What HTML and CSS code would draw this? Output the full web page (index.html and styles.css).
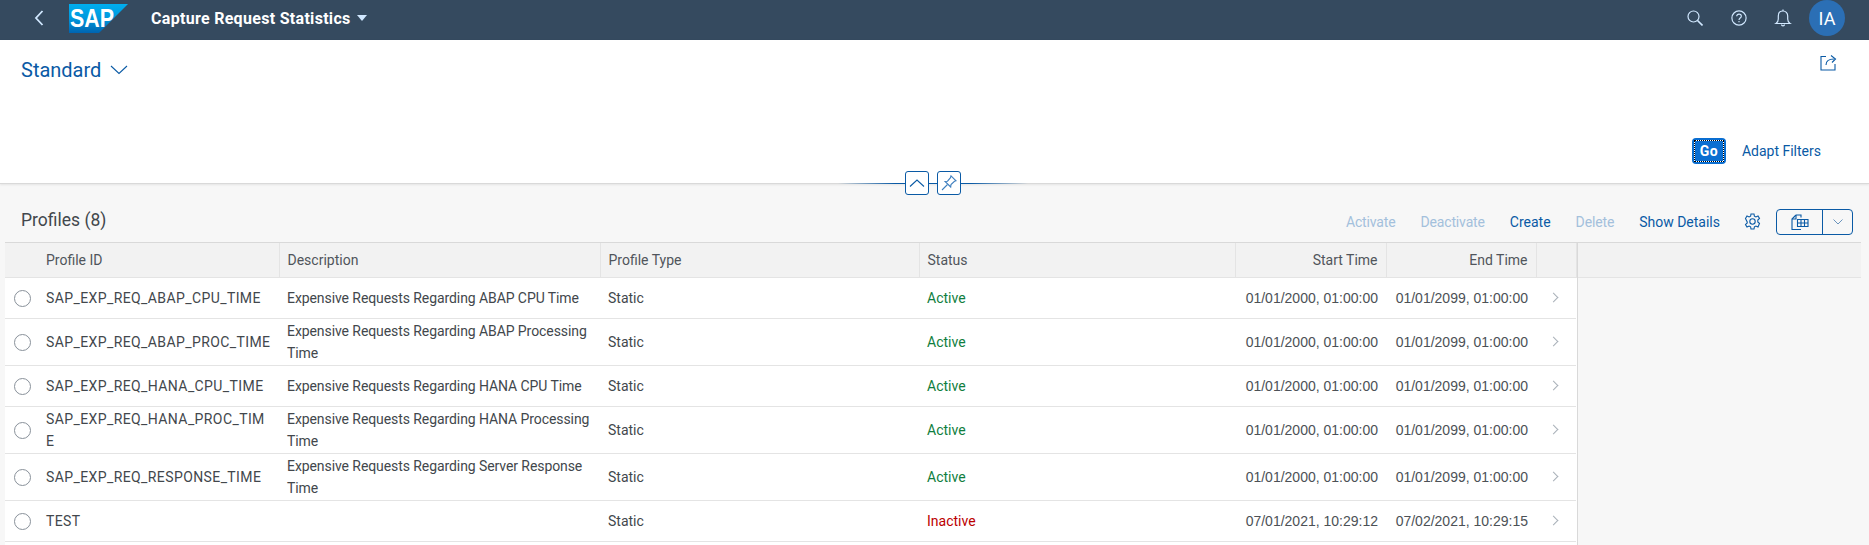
FILE: index.html
```html
<!DOCTYPE html>
<html lang="en">
<head>
    <meta charset="UTF-8">
    <meta name="viewport" content="width=device-width, initial-scale=1.0">
    <title>Capture Request Statistics</title>
    <link rel="stylesheet" href="styles.css">
</head>
<body>
    <header class="shell">
        <button class="shell-back" aria-label="Back">
            <svg width="12" height="18" viewBox="0 0 12 18"><path d="M9.500 2 3 9l6.500 7" fill="none" stroke="#d1e8ff" stroke-width="1.800"/></svg>
        </button>
        <svg class="logo" width="60" height="29" viewBox="0 0 60 29">
            <defs>
                <linearGradient id="logo-grad" x1="0" y1="0" x2="0" y2="1">
                    <stop offset="0" stop-color="#00aeef"/>
                    <stop offset="0.5" stop-color="#0098dd"/>
                    <stop offset="1" stop-color="#0064b0"/>
                </linearGradient>
            </defs>
            <polygon points="0,0 59,0 30,29 0,29" fill="url(#logo-grad)"/>
            <text x="1" y="23" class="logo-text" textLength="44" lengthAdjust="spacingAndGlyphs">SAP</text>
        </svg>
        <span class="shell-title">Capture Request Statistics</span>
        <span class="shell-caret"></span>
        <div class="shell-actions">
            <svg width="16" height="16" viewBox="0 0 16 16" fill="none" stroke="#d1e8ff" stroke-width="1.200"><circle cx="6.500" cy="6.500" r="5.500"/><path d="m10.500 10.500 5 5" stroke-width="1.600"/></svg>
            <svg width="16" height="16" viewBox="0 0 18 18" fill="none" stroke="#d1e8ff" stroke-width="1.300"><circle cx="9" cy="9" r="8"/><path d="M6.400 7C6.400 5.500 7.600 4.600 9 4.600s2.600.9 2.600 2.300c0 2.100-2.600 2.100-2.600 4.300"/><path d="M9 12.400v1.400"/></svg>
            <svg class="bell" width="18" height="18" viewBox="0 0 18 18" fill="none" stroke="#d1e8ff" stroke-width="1.200"><path d="M2 14.500c1.500-1 2.300-2 2.300-4.500V7c0-3 2-5 4.700-5s4.700 2 4.700 5v3c0 2.500.8 3.500 2.300 4.500z"/><path d="M7.500 15.500c0 1.800 3 1.800 3 0"/><path d="M9 2V.5"/></svg>
            <span class="avatar">IA</span>
        </div>
    </header>

    <section class="filterbar">
        <div class="variant-row">
            <span class="variant">Standard</span>
            <svg width="18" height="10" viewBox="0 0 18 10"><path d="m1 1 8 7.500L17 1" fill="none" stroke="#0a5aa5" stroke-width="1.100"/></svg>
            <svg class="share" width="17" height="17" viewBox="0 0 17 17" fill="none" stroke="#0a5aa5" stroke-width="1.100"><path d="M6 2.500H1v13.500h14v-6"/><path d="M6 11c0-4 3-6 8-6"/><path d="m11 1.500 4.500 3.500-3.500 3.500"/></svg>
        </div>
        <div class="filter-actions">
            <button class="btn-go"><span>Go</span></button>
            <span class="link">Adapt Filters</span>
        </div>
        <div class="collapse-line">
            <button class="square-btn"><svg width="16" height="8" viewBox="0 0 16 8"><path d="m1 7.500 7-6.500 7 6.500" fill="none" stroke="#0a5aa5" stroke-width="1.100"/></svg></button>
            <button class="square-btn"><svg width="16" height="16" viewBox="0 0 16 16" fill="none" stroke="#3f7fbf" stroke-width="1.100"><path d="m10 .8 5 5-1.500.5-3.500 3.200-.3 2.500L4 6.500l2.500-.3 3-3.500z"/><path d="m6.500 9.500-5.500 5.500"/></svg></button>
        </div>
    </section>

    <section class="content">
        <div class="toolbar">
            <h2>Profiles (8)</h2>
            <div class="toolbar-actions">
                <span class="action off">Activate</span>
                <span class="action off">Deactivate</span>
                <span class="action">Create</span>
                <span class="action off">Delete</span>
                <span class="action">Show Details</span>
                <svg class="gear" width="17" height="17" viewBox="0 0 17 17" fill="none" stroke="#0a5aa5" stroke-width="1.100"><circle cx="8.500" cy="8.500" r="2.700"/><path d="M7 1h3l.4 2.200 1.500.7L14 3l1.500 2.500-1.700 1.500v2l1.700 1.500L14 14l-2.100-.9-1.500.7L10 16H7l-.4-2.200-1.500-.7L3 14l-1.500-2.500L3.200 10V9L1.500 5.500 3 3l2.100.9 1.500-.7z"/></svg>
                <div class="export">
                    <span class="export-main"><svg width="18" height="16" viewBox="0 0 18 16" fill="none" stroke="#0a5aa5" stroke-width="1.100"><path d="M5 1h5v2.500M5 1 1 5v10.500h9"/><path d="M1 5h4V1"/><path d="M6.500 5.500h10.500v7H6.500zM6.500 9h10.500M10 5.500v7M13.500 5.500v7"/></svg></span>
                    <span class="export-arrow"><svg width="10" height="6" viewBox="0 0 10 6"><path d="m.5.500 4.500 4.500L9.500.500" fill="none" stroke="#6a94bd" stroke-width="1"/></svg></span>
                </div>
            </div>
        </div>

        <div class="table-wrap">
            <table class="profiles">
                <colgroup>
                    <col class="c-sel"><col class="c-id"><col class="c-desc"><col class="c-type"><col class="c-status"><col class="c-time"><col class="c-time2"><col class="c-nav">
                </colgroup>
                <thead>
                    <tr>
                        <th></th><th>Profile ID</th><th>Description</th><th>Profile Type</th><th>Status</th>
                        <th class="right">Start Time</th><th class="right">End Time</th><th></th>
                    </tr>
                </thead>
                <tbody>
                    <tr class="short">
                        <td><span class="radio"></span></td><td class="pid">SAP_EXP_REQ_ABAP_CPU_TIME</td><td class="desc">Expensive Requests Regarding ABAP CPU Time</td><td>Static</td><td class="active">Active</td>
                        <td class="date">01/01/2000, 01:00:00</td><td class="date">01/01/2099, 01:00:00</td><td class="nav"><span class="chev"></span></td>
                    </tr>
                    <tr>
                        <td><span class="radio"></span></td><td class="pid">SAP_EXP_REQ_ABAP_PROC_TIME</td><td class="desc">Expensive Requests Regarding ABAP Processing Time</td><td>Static</td><td class="active">Active</td>
                        <td class="date">01/01/2000, 01:00:00</td><td class="date">01/01/2099, 01:00:00</td><td class="nav"><span class="chev"></span></td>
                    </tr>
                    <tr class="short">
                        <td><span class="radio"></span></td><td class="pid">SAP_EXP_REQ_HANA_CPU_TIME</td><td class="desc">Expensive Requests Regarding HANA CPU Time</td><td>Static</td><td class="active">Active</td>
                        <td class="date">01/01/2000, 01:00:00</td><td class="date">01/01/2099, 01:00:00</td><td class="nav"><span class="chev"></span></td>
                    </tr>
                    <tr>
                        <td><span class="radio"></span></td><td class="pid">SAP_EXP_REQ_HANA_PROC_TIME</td><td class="desc">Expensive Requests Regarding HANA Processing Time</td><td>Static</td><td class="active">Active</td>
                        <td class="date">01/01/2000, 01:00:00</td><td class="date">01/01/2099, 01:00:00</td><td class="nav"><span class="chev"></span></td>
                    </tr>
                    <tr>
                        <td><span class="radio"></span></td><td class="pid">SAP_EXP_REQ_RESPONSE_TIME</td><td class="desc">Expensive Requests Regarding Server Response Time</td><td>Static</td><td class="active">Active</td>
                        <td class="date">01/01/2000, 01:00:00</td><td class="date">01/01/2099, 01:00:00</td><td class="nav"><span class="chev"></span></td>
                    </tr>
                    <tr class="short">
                        <td><span class="radio"></span></td><td class="pid">TEST</td><td class="desc"></td><td>Static</td><td class="inactive">Inactive</td>
                        <td class="date">07/01/2021, 10:29:12</td><td class="date">07/02/2021, 10:29:15</td><td class="nav"><span class="chev"></span></td>
                    </tr>
                    <tr class="sliver">
                        <td></td><td></td><td></td><td></td><td></td><td></td><td></td><td></td>
                    </tr>
                </tbody>
            </table>
            <div class="table-rest"><div class="rest-head"></div></div>
        </div>
    </section>
</body>
</html>
```

FILE: styles.css
```css
html, body {
    margin: 0;
    padding: 0;
    height: 545px;
    overflow: hidden;
}
body {
    font-family: Roboto, Arial, sans-serif;
    font-size: 14px;
    color: #42474c;
    background-color: #f7f7f7;
}
button {
    font-family: inherit;
    background: none;
    border: none;
    padding: 0;
}

/* shell bar */
.shell {
    display: flex;
    align-items: center;
    height: 40px;
    background-color: #354a5f;
}
.shell-back {
    display: flex;
    margin-left: 33px;
    margin-top: -4px;
    width: 36px;
}
.logo {
    margin-top: -3px;
    flex: none;
}
.logo-text {
    font-family: "Liberation Sans", Arial, sans-serif;
    font-size: 26px;
    font-weight: bold;
    fill: #fff;
}
.shell-title {
    margin-left: 22px;
    margin-top: -4px;
    font-size: 16px;
    font-weight: bold;
    letter-spacing: 0.3px;
    color: #fff;
}
.shell-caret {
    margin-left: 6px;
    margin-top: -4px;
    border-left: 5px solid transparent;
    border-right: 5px solid transparent;
    border-top: 6px solid #d1e8ff;
}
.shell-actions {
    display: flex;
    align-items: center;
    gap: 28px;
    margin-left: auto;
    margin-right: 24px;
    margin-top: -4px;
}
.bell {
    margin: 0 -1px;
}
.avatar {
    display: flex;
    align-items: center;
    justify-content: center;
    width: 36px;
    height: 36px;
    margin-left: -10px;
    border-radius: 50%;
    background-color: #2b6fb5;
    color: #fff;
    font-size: 18px;
}

/* filter bar */
.filterbar {
    height: 143px;
    background-color: #fff;
    border-bottom: 1px solid #d9d9d9;
    box-shadow: 0 1px 2px rgba(0, 0, 0, 0.08);
    position: relative;
}
.variant-row {
    display: flex;
    align-items: center;
    gap: 9px;
    padding: 18px 32px 0 21px;
}
.variant {
    font-size: 20px;
    color: #0a5aa5;
}
.share {
    margin-left: auto;
    margin-top: -15px;
}
.filter-actions {
    display: flex;
    align-items: center;
    justify-content: flex-end;
    gap: 16px;
    margin-top: 56px;
    padding-right: 48px;
}
.btn-go {
    width: 34px;
    height: 26px;
    padding: 2px;
    background-color: #0a6ed1;
    border-radius: 4px;
    color: #fff;
    font-weight: bold;
    font-size: 14px;
    letter-spacing: 0.4px;
}
.btn-go span {
    display: block;
    height: 100%;
    line-height: 20px;
    box-sizing: border-box;
    border: 1px dotted #000;
    background: linear-gradient(#0a6ed1, #0a6ed1) padding-box, #fff border-box;
}
.link {
    color: #0a5aa5;
}
/* line with the two buttons on the bottom edge of the filter bar */
.collapse-line {
    position: absolute;
    left: 838px;
    top: 131px;
    width: 190px;
    height: 24px;
    display: flex;
    justify-content: center;
    gap: 8px;
    background: linear-gradient(to right, transparent, #0a5aa5 30%, #0a5aa5 70%, transparent) center / 100% 1px no-repeat;
}
.square-btn {
    display: flex;
    align-items: center;
    justify-content: center;
    width: 24px;
    height: 24px;
    box-sizing: border-box;
    background-color: #fff;
    border: 1px solid #0a5aa5;
    border-radius: 3px;
}

/* table area */
.content {
    background-color: #f7f7f7;
    padding-left: 5px;
    padding-right: 8px;
}
.toolbar {
    display: flex;
    align-items: center;
    justify-content: space-between;
    height: 59px;
    padding-right: 8px;
    padding-top: 17px;
    box-sizing: border-box;
    border-bottom: 1px solid #d9d9d9;
}
.toolbar h2 {
    margin: -4px 0 0 16px;
    font-size: 17.5px;
    font-weight: normal;
}
.toolbar-actions {
    display: flex;
    align-items: center;
}
.action {
    color: #0a5aa5;
    margin-left: 25px;
}
.action.off {
    color: #a3c0dc;
    letter-spacing: -0.15px;
}
.gear {
    margin-left: 24px;
}
.export {
    display: flex;
    margin-left: 15px;
    height: 26px;
    width: 77px;
    box-sizing: border-box;
    border: 1px solid #0a5aa5;
    border-radius: 4px;
}
.export-main {
    display: flex;
    align-items: center;
    justify-content: center;
    width: 45px;
    border-right: 1px solid #0a5aa5;
}
.export-arrow {
    display: flex;
    flex: 1;
    align-items: center;
    justify-content: center;
}
.table-wrap {
    display: flex;
}
.profiles {
    flex: none;
    width: 1571px;
    table-layout: fixed;
    border-collapse: collapse;
    background-color: #fff;
}
.c-sel { width: 33px; }
.c-id { width: 241px; }
.c-desc { width: 321px; }
.c-type { width: 319px; }
.c-status { width: 316px; }
.c-time { width: 151px; }
.c-time2 { width: 150px; }
.c-nav { width: 40px; }
.profiles th {
    height: 34px;
    padding: 0 8px;
    background-color: #f2f2f2;
    border-right: 1px solid #e4e4e4;
    border-bottom: 1px solid #e4e4e4;
    font-weight: normal;
    text-align: left;
    color: #50555b;
}
.profiles th:first-child {
    border-right: none;
}
.profiles th.right {
    text-align: right;
}
.profiles td {
    height: 47px;
    padding: 0 8px;
    box-sizing: border-box;
    border-bottom: 1px solid #e4e4e4;
    line-height: 22px;
}
.profiles td.pid {
    letter-spacing: 0.4px;
    word-break: break-all;
}
.profiles td.desc {
    letter-spacing: -0.08px;
}
.profiles tr.short td {
    height: 41px;
}
.profiles tr.sliver td {
    height: 3px;
    border-bottom: none;
    line-height: 0;
}
.profiles td.date {
    font-family: "Liberation Sans", Arial, sans-serif;
    color: #4c5156;
    text-align: right;
    padding: 0 8px 0 0;
}
.profiles td:first-child {
    padding: 0 0 0 9px;
}
.profiles td.active {
    color: #107e3e;
}
.profiles td.inactive {
    color: #bb0000;
}
.profiles td.nav {
    text-align: center;
}
.radio {
    display: block;
    width: 17px;
    height: 17px;
    box-sizing: border-box;
    border: 1px solid #89919a;
    border-radius: 50%;
}
.chev {
    display: inline-block;
    width: 6px;
    height: 6px;
    margin: 0 5px 2px 0;
    border-top: 1px solid #a9b0b8;
    border-right: 1px solid #a9b0b8;
    transform: rotate(45deg);
}
.table-rest {
    flex: 1;
    border-left: 1px solid #d9d9d9;
}
.rest-head {
    height: 34px;
    background-color: #f2f2f2;
    border-bottom: 1px solid #e4e4e4;
}
```
